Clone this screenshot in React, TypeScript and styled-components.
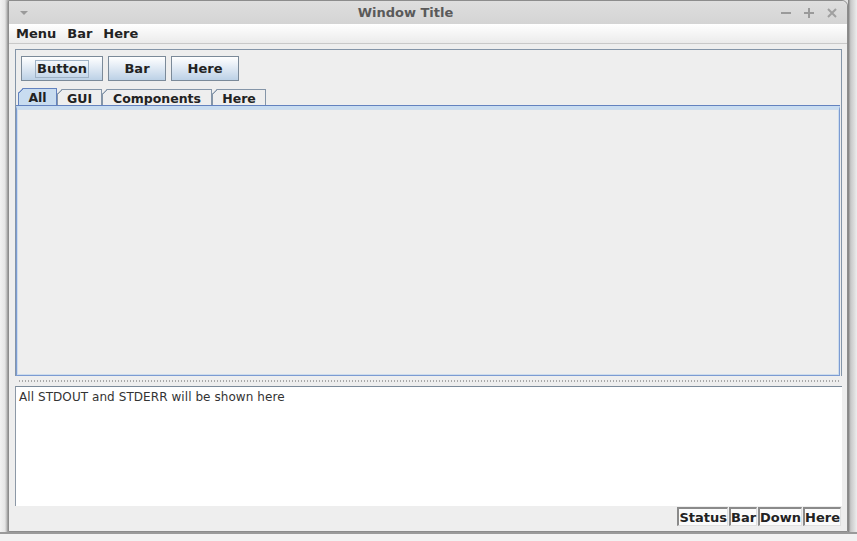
import React from "react";
import styled, { createGlobalStyle } from "styled-components";

const Global = createGlobalStyle`
  html, body { margin: 0; padding: 0; background: #d4d4d4; overflow: hidden; }
  body { font-family: "DejaVu Sans", "Liberation Sans", sans-serif; }
`;

const Desktop = styled.div`
  width: 857px;
  height: 541px;
  display: flex;
  flex-direction: column;
  background: #e2e2e2;
`;

const DesktopRow = styled.div`
  display: flex;
  height: 532px;
`;

const SideStrip = styled.div<{ $w: number; $left?: boolean }>`
  width: ${(p) => p.$w}px;
  flex: none;
  background: ${(p) =>
    p.$left
      ? "linear-gradient(90deg, #f2f2f2 0, #e6e6e6 60%, #a9a9a9 100%)"
      : "linear-gradient(90deg, #7a7a7a 0, #c8c8c8 30%, #ededed 100%)"};
`;

const Taskbar = styled.div`
  flex: 1;
  background: #f2f2f2;
  border-top: 2px solid #9a9a9a;
`;

const Window = styled.div`
  width: 840px;
  flex: none;
  display: flex;
  flex-direction: column;
  background: #eeeeee;
  border: 1px solid #8c8c8c;
  border-top-right-radius: 6px;
  box-sizing: border-box;
  box-shadow: 0 2px 2px rgba(0, 0, 0, 0.35);
`;

const TitleBar = styled.div`
  height: 23px;
  flex: none;
  display: flex;
  align-items: center;
  background: linear-gradient(#dedede, #d4d4d4);
  border-top-right-radius: 6px;
`;

const TitleText = styled.div`
  flex: 1;
  text-align: center;
  font-weight: bold;
  font-size: 13px;
  color: #5a5a5a;
  padding-left: 4px;
`;

const TitleMenuArrow = styled.div`
  width: 0;
  height: 0;
  margin-left: 11px;
  border-left: 4px solid transparent;
  border-right: 4px solid transparent;
  border-top: 4px solid #9a9a9a;
`;

const TitleButtons = styled.div`
  display: flex;
  gap: 9px;
  margin-right: 8px;
  align-items: center;
`;

const TitleBtn = styled.div`
  width: 14px;
  height: 14px;
  display: flex;
  align-items: center;
  justify-content: center;
`;

const MenuBar = styled.div`
  height: 19px;
  flex: none;
  display: flex;
  align-items: center;
  padding-left: 7px;
  background: linear-gradient(#ffffff, #ebebeb);
  border-bottom: 1px solid #c9c9c9;
`;

const MenuItem = styled.div`
  font-weight: bold;
  font-size: 13px;
  color: #222;
  padding: 0 11px 0 0;
`;

const Body = styled.div`
  flex: 1;
  display: flex;
  flex-direction: column;
  padding: 5px 5px 0 6px;
`;

const TopPanel = styled.div`
  height: 327px;
  flex: none;
  display: flex;
  flex-direction: column;
  border: 1px solid #8495a8;
  border-bottom: none;
  box-sizing: border-box;
`;

const ToolBar = styled.div`
  display: flex;
  gap: 5px;
  padding: 6px 0 0 5px;
  height: 38px;
  flex: none;
  box-sizing: border-box;
`;

const ToolButton = styled.button<{ $w: number }>`
  width: ${(p) => p.$w}px;
  height: 25px;
  padding: 0;
  font-family: "DejaVu Sans", sans-serif;
  font-weight: bold;
  font-size: 13px;
  color: #222;
  border: 1px solid #7b8a99;
  background: linear-gradient(#ffffff 0, #e8eff7 35%, #bcd1e6 100%);
  display: flex;
  align-items: center;
  justify-content: center;
  cursor: default;
`;

const FocusRing = styled.span`
  border: 1px solid #9fb2c6;
  padding: 0 1px;
  line-height: 16px;
`;

const TabStrip = styled.div`
  display: flex;
  padding-left: 2px;
  height: 18px;
  flex: none;
  align-items: flex-end;
`;

const Tab = styled.div<{ $active?: boolean; $w: number }>`
  width: ${(p) => p.$w}px;
  height: ${(p) => (p.$active ? 18 : 17)}px;
  box-sizing: border-box;
  display: flex;
  align-items: center;
  justify-content: center;
  font-weight: bold;
  font-size: 12.5px;
  color: #222;
  background: ${(p) => (p.$active ? "#c8dcf0" : "#eeeeee")};
  border: 1px solid ${(p) => (p.$active ? "#6382bf" : "#8495a8")};
  border-bottom: none;
  clip-path: polygon(5px 0, 100% 0, 100% 100%, 0 100%, 0 5px);
  position: relative;
  &::before {
    content: "";
    position: absolute;
    left: -1px;
    top: -1px;
    width: 7px;
    height: 7px;
    background: linear-gradient(
      135deg,
      transparent 3.2px,
      ${(p) => (p.$active ? "#6382bf" : "#8495a8")} 3.2px,
      ${(p) => (p.$active ? "#6382bf" : "#8495a8")} 4.6px,
      transparent 4.6px
    );
  }
`;

const TabPanel = styled.div`
  flex: 1;
  margin-right: 1px;
  border: 1px solid #7c9bd2;
  box-shadow: inset 0 0 0 1px #cddcec, inset 0 0 0 2px #eeeeee;
  background: #eeeeee;
  border-top: 3px solid #c8dcf0;
  position: relative;
  &::before {
    content: "";
    position: absolute;
    left: -1px;
    right: -1px;
    top: -4px;
    height: 1px;
    background: #6382bf;
  }
`;

const Splitter = styled.div`
  height: 10px;
  flex: none;
  display: flex;
  align-items: center;
  padding: 0 2px 0 3px;
`;

const Dots = styled.div`
  flex: 1;
  height: 2px;
  background-image: radial-gradient(circle, #a8a8a8 0.6px, transparent 0.8px);
  background-size: 3px 2px;
`;

const Output = styled.div`
  height: 120px;
  flex: none;
  background: #ffffff;
  border-top: 1px solid #7b8a99;
  border-left: 1px solid #8c98a6;
  box-sizing: border-box;
  padding: 3px 3px;
  font-size: 12px;
  letter-spacing: 0.07px;
  color: #333;
`;

const StatusBar = styled.div`
  height: 21px;
  flex: none;
  display: flex;
  justify-content: flex-end;
  align-items: center;
  padding-right: 1px;
`;

const StatusCell = styled.div`
  height: 19px;
  box-sizing: border-box;
  padding: 0;
  display: flex;
  align-items: center;
  font-weight: bold;
  font-size: 13px;
  color: #222;
  background: #fbfbfb;
  border-top: 2px solid #8a8a8a;
  border-left: 2px solid #8a8a8a;
  border-right: 1px solid #e0e0e0;
  border-bottom: 1px solid #e0e0e0;
  margin-left: 1px;
`;

const Minus = () => (
  <svg width="12" height="12" viewBox="0 0 12 12">
    <rect x="1" y="5" width="10" height="2" fill="#9a9a9a" />
  </svg>
);
const Plus = () => (
  <svg width="12" height="12" viewBox="0 0 12 12">
    <rect x="1" y="5" width="10" height="2" fill="#9a9a9a" />
    <rect x="5" y="1" width="2" height="10" fill="#9a9a9a" />
  </svg>
);
const Close = () => (
  <svg width="12" height="12" viewBox="0 0 12 12">
    <path d="M2 2 L10 10 M10 2 L2 10" stroke="#a0a0a0" strokeWidth="2" />
  </svg>
);

export default function App() {
  return (
    <>
      <Global />
      <Desktop>
        <DesktopRow>
          <SideStrip $w={8} $left />
          <Window>
            <TitleBar>
              <TitleMenuArrow />
              <TitleText>Window Title</TitleText>
              <TitleButtons>
                <TitleBtn><Minus /></TitleBtn>
                <TitleBtn><Plus /></TitleBtn>
                <TitleBtn><Close /></TitleBtn>
              </TitleButtons>
            </TitleBar>
            <MenuBar>
              <MenuItem>Menu</MenuItem>
              <MenuItem>Bar</MenuItem>
              <MenuItem>Here</MenuItem>
            </MenuBar>
            <Body>
              <TopPanel>
                <ToolBar>
                  <ToolButton $w={82}>
                    <FocusRing>Button</FocusRing>
                  </ToolButton>
                  <ToolButton $w={58}>Bar</ToolButton>
                  <ToolButton $w={68}>Here</ToolButton>
                </ToolBar>
                <TabStrip>
                  <Tab $active $w={39}>All</Tab>
                  <Tab $w={45}>GUI</Tab>
                  <Tab $w={110}>Components</Tab>
                  <Tab $w={54}>Here</Tab>
                </TabStrip>
                <TabPanel />
              </TopPanel>
              <Splitter>
                <Dots />
              </Splitter>
              <Output>All STDOUT and STDERR will be shown here</Output>
              <StatusBar>
                <StatusCell>Status</StatusCell>
                <StatusCell>Bar</StatusCell>
                <StatusCell>Down</StatusCell>
                <StatusCell>Here</StatusCell>
              </StatusBar>
            </Body>
          </Window>
          <SideStrip $w={9} />
        </DesktopRow>
        <Taskbar />
      </Desktop>
    </>
  );
}
